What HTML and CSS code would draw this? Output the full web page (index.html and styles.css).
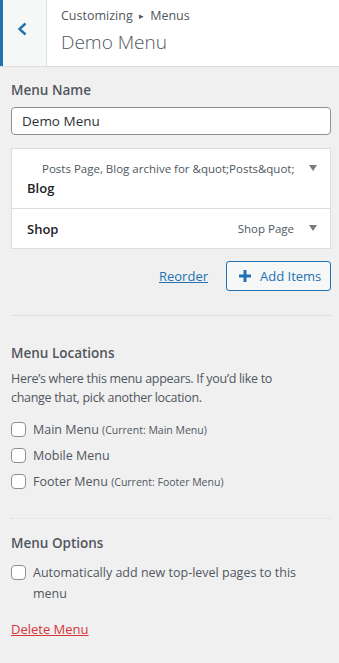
FILE: index.html
```html
<!DOCTYPE html>
<html>
<head>
<meta charset="utf-8">
<link rel="stylesheet" href="styles.css">
</head>
<body>
<div class="header">
  <div class="back">
    <svg width="12" height="16" viewBox="0 0 12 16"><path d="M9.5 2.5 L3.5 8 L9.5 13.5" fill="none" stroke="#2271b1" stroke-width="2.4"/></svg>
  </div>
  <div class="titles">
    <div class="crumb">Customizing <span class="sep">&#9656;</span> Menus</div>
    <div class="title">Demo Menu</div>
  </div>
</div>
<div class="content">
  <div class="label">Menu Name</div>
  <div class="input">Demo Menu</div>
  <div class="items">
    <div class="item item-tall">
      <div class="item-main">
        <div class="item-type">Posts Page, Blog archive for &amp;quot;Posts&amp;quot;</div>
        <div class="item-title">Blog</div>
      </div>
      <span class="arrow"></span>
    </div>
    <div class="item">
      <div class="item-row">
        <div class="item-title">Shop</div>
        <div class="item-type">Shop Page</div>
      </div>
      <span class="arrow"></span>
    </div>
  </div>
  <div class="actions">
    <a class="reorder">Reorder</a>
    <div class="add">
      <svg width="14" height="14" viewBox="0 0 14 14"><path d="M7 1 V13 M1 7 H13" stroke="#2271b1" stroke-width="3"/></svg>
      <span>Add Items</span>
    </div>
  </div>
  <div class="divider"></div>
  <div class="label section">Menu Locations</div>
  <div class="desc">Here’s where this menu appears. If you’d like to change that, pick another location.</div>
  <div class="checks">
    <div class="check"><span class="box"></span><span>Main Menu <small>(Current: Main Menu)</small></span></div>
    <div class="check"><span class="box"></span><span>Mobile Menu</span></div>
    <div class="check"><span class="box"></span><span>Footer Menu <small>(Current: Footer Menu)</small></span></div>
  </div>
  <div class="divider dotted"></div>
  <div class="label section2">Menu Options</div>
  <div class="check auto"><span class="box"></span><span class="auto-text">Automatically add new top-level pages to this menu</span></div>
  <a class="delete">Delete Menu</a>
</div>
</body>
</html>
```
FILE: styles.css
```css
* { box-sizing: border-box; }
html, body { margin: 0; padding: 0; }
body {
  width: 339px;
  height: 663px;
  overflow: hidden;
  background: #f0f0f1;
  font-family: "Open Sans", "Noto Sans", sans-serif;
  font-size: 13px;
  color: #50575e;
}
.header {
  display: flex;
  height: 67px;
  background: #fff;
  border-bottom: 1px solid #dcdcde;
}
.back {
  width: 47px;
  background: #f6f7f7;
  border-left: 3px solid #2271b1;
  border-right: 1px solid #dcdcde;
  display: flex;
  align-items: center;
  justify-content: center;
  padding: 0 5px 8px 0;
}
.titles { padding: 7px 0 0 14px; }
.crumb { font-size: 12.5px; line-height: 18px; color: #50575e; }
.sep { font-size: 9px; position: relative; top: -1px; margin: 0 3px; }
.title { font-size: 19px; font-weight: 300; line-height: 26px; margin-top: 3px; color: #50575e; }
.content { padding: 0 8px 0 11px; }
.label { font-size: 13.5px; font-weight: 600; margin-top: 13px; line-height: 20px; }
.input {
  margin-top: 7px;
  height: 28px;
  background: #fff;
  border: 1px solid #8c8f94;
  border-radius: 4px;
  padding: 0 10px;
  line-height: 26px;
  font-size: 13.5px;
  color: #2c3338;
}
.items { margin-top: 13px; border: 1px solid #dcdcde; background: #fff; }
.item { position: relative; height: 40px; padding: 0 36px 0 15px; display: flex; align-items: center; }
.item + .item { border-top: 1px solid #dcdcde; }
.item-tall { height: 59px; }
.item-main { padding-top: 1px; }
.item-main .item-type { padding-left: 15px; line-height: 18px; white-space: nowrap; }
.item-row { display: flex; justify-content: space-between; width: 100%; }
.item-title { font-size: 13px; font-weight: 600; color: #1d2327; line-height: 20px; }
.item-type { font-size: 11.5px; color: #50575e; line-height: 20px; }
.arrow {
  position: absolute;
  right: 13px;
  top: 16px;
  width: 0; height: 0;
  border-left: 4px solid transparent;
  border-right: 4px solid transparent;
  border-top: 6px solid #787c82;
}
.actions { display: flex; justify-content: flex-end; align-items: center; gap: 18px; margin-top: 12px; }
.reorder { color: #2271b1; text-decoration: underline; font-size: 13px; }
.add {
  height: 30px;
  width: 105px;
  border: 1px solid #2271b1;
  border-radius: 3px;
  background: #f6f7f7;
  color: #2271b1;
  display: flex;
  align-items: center;
  gap: 8px;
  padding-left: 11px;
  font-size: 13px;
}
.divider { height: 1px; background: #dcdcde; margin-top: 24px; }
.dotted { background: none; border-top: 1px dotted #dcdcde; margin-top: 24px; }
.section { margin-top: 27px; }
.desc { margin-top: 6px; max-width: 300px; line-height: 19px; font-size: 12.5px; letter-spacing: -0.3px; }
.checks { margin-top: 9px; }
.check { display: flex; align-items: center; gap: 7px; height: 26px; font-size: 12.5px; }
.check small { font-size: 10.5px; }
.box {
  width: 15px; height: 15px;
  border: 1px solid #8c8f94;
  border-radius: 4px;
  background: #fff;
  flex: none;
}
.section2 { margin-top: 14px; }
.auto { align-items: flex-start; height: auto; margin-top: 9px; }
.auto .box { margin-top: 3px; }
.auto-text { line-height: 21px; }
.delete { display: block; margin-top: 16px; color: #d63638; text-decoration: underline; }
```
